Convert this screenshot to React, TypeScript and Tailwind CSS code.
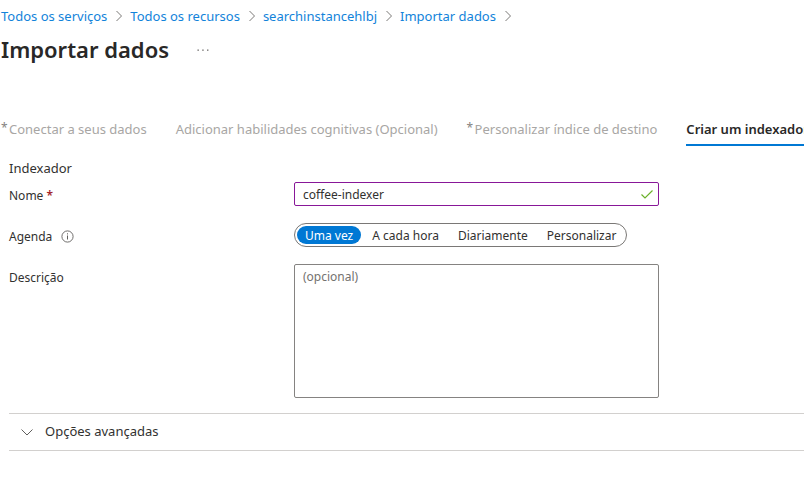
import { useState } from "react";

const crumbs = ["Todos os serviços", "Todos os recursos", "searchinstancehlbj", "Importar dados"];

const tabs = [
  { label: "Conectar a seus dados", required: true, active: false },
  { label: "Adicionar habilidades cognitivas (Opcional)", required: false, active: false },
  { label: "Personalizar índice de destino", required: true, active: false },
  { label: "Criar um indexador", required: false, active: true },
];

const schedules = ["Uma vez", "A cada hora", "Diariamente", "Personalizar"];

function ChevronRight() {
  return (
    <svg className="mr-2 ml-[9px] h-3 w-[6px] shrink-0" viewBox="0 0 6 12" fill="none" stroke="#7a7876" aria-hidden="true">
      <path d="M0.5 1L5.5 6L0.5 11" />
    </svg>
  );
}

export default function App() {
  const [name, setName] = useState("coffee-indexer");
  const [schedule, setSchedule] = useState("Uma vez");
  const [description, setDescription] = useState("");

  return (
    <main className="overflow-hidden bg-white pb-12 font-['Noto_Sans',sans-serif] text-[13px] leading-5 text-[#323130]">
      <nav aria-label="Trilha" className="flex items-center px-px pt-[6px] whitespace-nowrap">
        {crumbs.map((crumb) => (
          <span key={crumb} className="flex items-center">
            <a href="#" className="text-[#1283da]">{crumb}</a>
            <ChevronRight />
          </span>
        ))}
      </nav>

      <header className="flex items-center gap-7 px-px pt-[7px]">
        <h1 className="text-[22px] leading-8 font-semibold text-[#292827]">Importar dados</h1>
        <button type="button" aria-label="Mais opções" className="flex h-6 items-center pt-0.5">
          <svg className="h-[2px] w-3" viewBox="0 0 12 2" fill="#605e5c" aria-hidden="true">
            <rect x="0.5" y="0.5" width="1.3" height="1.3" />
            <rect x="5.3" y="0.5" width="1.3" height="1.3" />
            <rect x="10.1" y="0.5" width="1.3" height="1.3" />
          </svg>
        </button>
      </header>

      <div role="tablist" className="mt-12 flex gap-[29px] pl-px whitespace-nowrap">
        {tabs.map((tab) => (
          <button
            key={tab.label}
            type="button"
            role="tab"
            aria-selected={tab.active}
            className={`flex h-[33px] shrink-0 items-center border-b-2 ${
              tab.active ? "border-[#0078d4] font-semibold text-[#292827]" : "border-transparent text-[#a8a6a4]"
            }`}
          >
            {tab.required && <span className="w-2 pb-0.5 text-left text-xs text-[#858381]">*</span>}
            {tab.label}
          </button>
        ))}
      </div>

      <form className="pt-3 pl-[9px]">
        <h2>Indexador</h2>

        <div className="mt-1 flex items-center text-xs">
          <label htmlFor="name" className="w-[285px] shrink-0 pt-[3px]">
            Nome <span className="font-semibold text-[#a4262c]">*</span>
          </label>
          <div className="flex h-6 max-w-[365px] flex-1 items-center rounded-xs border border-[#881798] pr-[5px] pl-2">
            <input
              id="name"
              required
              value={name}
              onChange={(e) => setName(e.target.value)}
              className="min-w-0 flex-1 pt-0.5 outline-none"
            />
            <svg className="h-[9px] w-3" viewBox="0 0 12 9" fill="none" stroke="#6bb02a" strokeWidth="1.2" aria-hidden="true">
              <path d="M0.5 4.5L4 8L11.5 0.5" />
            </svg>
          </div>
        </div>

        <fieldset className="mt-[17px] flex items-center text-xs">
          <div className="flex w-[285px] shrink-0 items-center gap-[9px] pt-[3px]">
            <span id="schedule-label">Agenda</span>
            <svg className="size-[13px]" viewBox="0 0 13 13" fill="none" stroke="#605e5c" role="img" aria-label="Informações">
              <circle cx="6.5" cy="6.5" r="5.6" strokeWidth="0.9" />
              <path d="M6.5 5.5V9.5M6.5 3.3V4.4" />
            </svg>
          </div>
          <div
            role="radiogroup"
            aria-labelledby="schedule-label"
            className="flex h-6 items-center rounded-full border border-[#7a7876] px-[2px] whitespace-nowrap"
          >
            {schedules.map((option) => (
              <label
                key={option}
                className="flex h-[18px] items-center rounded-full px-2 pt-0.5 not-last:mr-[3px] has-checked:bg-[#0078d4] has-checked:text-white"
              >
                <input
                  type="radio"
                  name="schedule"
                  className="sr-only"
                  checked={schedule === option}
                  onChange={() => setSchedule(option)}
                />
                {option}
              </label>
            ))}
          </div>
        </fieldset>

        <div className="mt-[17px] flex text-xs leading-5">
          <label htmlFor="description" className="w-[285px] shrink-0 pt-1">
            Descrição
          </label>
          <textarea
            id="description"
            placeholder="(opcional)"
            value={description}
            onChange={(e) => setDescription(e.target.value)}
            className="block h-[134px] max-w-[365px] min-w-0 flex-1 resize-none rounded-xs border border-[#858381] px-2 py-0.5 outline-none placeholder:text-[#747270]"
          />
        </div>

        <section className="mt-[15px] border-y border-[#d2d0ce]">
          <button type="button" aria-expanded="false" className="flex h-9 w-full items-center gap-3 pl-3">
            <svg className="h-[7px] w-3" viewBox="0 0 12 7" fill="none" stroke="#605e5c" aria-hidden="true">
              <path d="M0.5 0.5L6 6L11.5 0.5" />
            </svg>
            <span className="pb-0.5">Opções avançadas</span>
          </button>
        </section>
      </form>
    </main>
  );
}
